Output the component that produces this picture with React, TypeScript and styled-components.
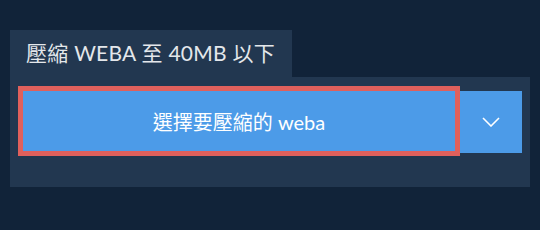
import React from "react";
import styled, { createGlobalStyle } from "styled-components";

const GlobalStyle = createGlobalStyle`
  html, body {
    margin: 0;
    padding: 0;
    background: #112339;
  }
  body {
    font-family: Lato, "Noto Sans CJK TC", sans-serif;
  }
`;

const Page = styled.div`
  width: 540px;
  height: 230px;
  padding: 30px 10px 0;
  box-sizing: border-box;
  background: #112339;
`;

const Tab = styled.div`
  display: inline-flex;
  align-items: center;
  height: 47px;
  padding: 0 17px 4px 16px;
  box-sizing: border-box;
  background: #223750;
  color: #e4e7eb;
  font-size: 21px;
  letter-spacing: 0.25px;
`;

const Panel = styled.div`
  height: 110px;
  background: #223750;
  padding: 9px 8px 0;
  box-sizing: border-box;
`;

const ButtonRow = styled.div`
  display: flex;
  align-items: flex-start;
`;

const UploadButton = styled.button`
  width: 442px;
  height: 70px;
  border: 5px solid #e0605c;
  background: #4c9be8;
  color: #ffffff;
  font-family: inherit;
  font-size: 20px;
  padding: 0;
  cursor: pointer;
`;

const DropButton = styled.button`
  width: 62px;
  height: 62px;
  margin-top: 5px;
  border: none;
  background: #4c9be8;
  display: flex;
  align-items: center;
  justify-content: center;
  padding: 0;
  cursor: pointer;
`;

export default function App() {
  return (
    <>
      <GlobalStyle />
      <Page>
        <Tab>壓縮 WEBA 至 40MB 以下</Tab>
        <Panel>
          <ButtonRow>
            <UploadButton>選擇要壓縮的 weba</UploadButton>
            <DropButton aria-label="更多選項">
              <svg width="18" height="10" viewBox="0 0 18 10">
                <path
                  d="M1 1 L9 9 L17 1"
                  fill="none"
                  stroke="#ffffff"
                  strokeWidth="1.6"
                />
              </svg>
            </DropButton>
          </ButtonRow>
        </Panel>
      </Page>
    </>
  );
}
